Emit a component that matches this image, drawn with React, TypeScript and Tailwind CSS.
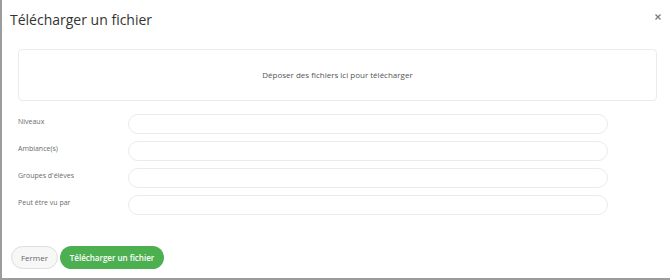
import React from "react";

const font = { fontFamily: "'Open Sans', 'Noto Sans', sans-serif" };

function Row({ label }: { label: string }) {
  return (
    <div className="flex items-start h-[20px]">
      <div className="w-[126px] pl-[16px] pt-[3px] text-[7px] leading-[10px] text-[#6b6b6b]">{label}</div>
      <div className="w-[480px] h-[20px] rounded-full border border-[#ebebeb] bg-white" />
    </div>
  );
}

export default function App() {
  return (
    <div
      style={font}
      className="relative w-[670px] h-[280px] bg-white border-l-2 border-b-2 border-[#9c9c9c] flex flex-col overflow-hidden"
    >
      <div className="h-[49px] pl-[8px] pt-[10px]">
        <h1 className="text-[14px] leading-[19px] text-[#333333] font-normal">Télécharger un fichier</h1>
      </div>
      <button className="absolute right-[7px] top-[12px] w-[10px] h-[10px] flex items-center justify-center text-[#7a7a7a]">
        <svg width="6" height="6" viewBox="0 0 6 6" fill="none" stroke="currentColor" strokeWidth="1.3">
          <path d="M0.5 0.5 L5.5 5.5 M5.5 0.5 L0.5 5.5" />
        </svg>
      </button>

      <div className="ml-[16px] w-[639px] h-[52px] rounded-[4px] border border-[#ebebeb] flex items-center justify-center">
        <span className="text-[8px] text-[#555555]">Déposer des fichiers ici pour télécharger</span>
      </div>

      <div className="mt-[13px] flex flex-col gap-[7px]">
        <Row label="Niveaux" />
        <Row label="Ambiance(s)" />
        <Row label="Groupes d'élèves" />
        <Row label="Peut être vu par" />
      </div>

      <div className="mt-[31px] ml-[9px] flex gap-[2px]">
        <button className="w-[47px] h-[23px] rounded-full border border-[#dedede] bg-[#f7f7f7] text-[8px] text-[#666666]">
          Fermer
        </button>
        <button className="w-[104px] h-[23px] rounded-full bg-[#4caf50] text-[8px] font-semibold text-white">
          Télécharger un fichier
        </button>
      </div>
    </div>
  );
}
